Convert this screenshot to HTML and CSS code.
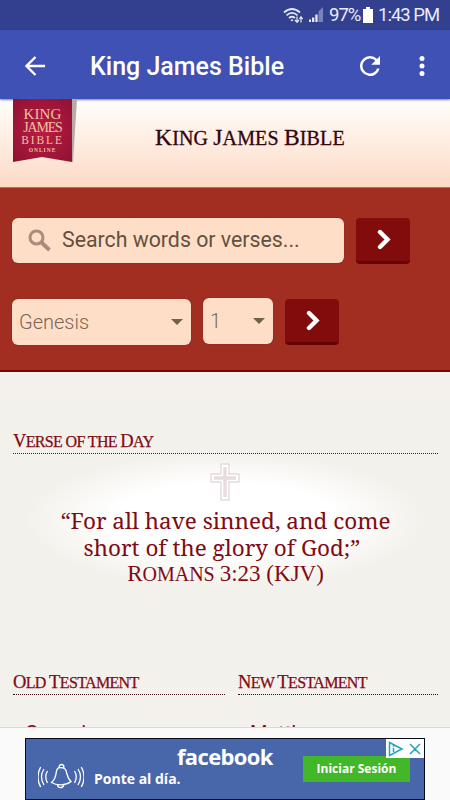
FILE: index.html
```
<!DOCTYPE html>
<html lang="en">
<head>
  <meta charset="UTF-8" />
  <meta name="viewport" content="width=device-width,initial-scale=1" />
  <title>King James Bible</title>
  <link rel="stylesheet" href="styles.css">
</head>
<body>

  <!-- Phone status bar -->
  <div class="status-bar">
    <svg class="wifi" width="21" height="17" viewBox="0 0 21 17" fill="none" stroke="#e4e8f8" stroke-width="1.7">
      <path d="M1 5.500Q9-1.500 17 5.500M3.500 8.300Q9 3.500 14.500 8.300M6 11Q9 8.500 12 11"/>
      <circle cx="9" cy="13.300" r=".8" fill="#e4e8f8" stroke-width=".7"/>
      <path d="M14 9.500v6M12 13l2 2.300 2-2.300M18 15.500v-6M16.300 12L18 9.800l1.700 2.200" stroke-width="1.200"/>
    </svg>
    <svg class="signal" width="16" height="16" viewBox="0 0 16 16" fill="#e4e8f8">
      <path d="M1 12.500h2V15H1zM4 10.500h2.300V15H4zM7.300 7.500h2.300V15H7.300z"/>
      <path d="M10.500 4.500L15 0v15h-4.500z" opacity=".4"/>
    </svg>
    <span class="percent">97%</span>
    <svg class="battery" width="10" height="16" viewBox="0 0 10 16" fill="#fff"><path d="M3 0h4v2h3v14H0V2h3z"/></svg>
    <span class="clock">1:43 PM</span>
  </div>

  <!-- App toolbar -->
  <div class="toolbar">
    <svg class="back" width="20" height="20" viewBox="0 0 20 20" fill="none" stroke="#fff" stroke-width="2.300"><path d="M20 10H2M10.500 1L1.500 10l9 9"/></svg>
    <h1>King James Bible</h1>
    <svg class="refresh" width="20" height="20" viewBox="4 4 16 16" fill="#fff"><path d="M17.650 6.350A7.960 7.960 0 0 0 12 4a8 8 0 1 0 7.730 10h-2.080A6 6 0 1 1 12 6c1.660 0 3.140.69 4.220 1.780L13 11h7V4z"/></svg>
    <svg class="more" width="6" height="20" viewBox="0 0 6 20" fill="#fff"><circle cx="3" cy="2.500" r="2.500"/><circle cx="3" cy="10" r="2.500"/><circle cx="3" cy="17.500" r="2.500"/></svg>
  </div>

  <div class="page">
    <header class="site-header">
      <div class="ribbon">
        <span class="r1">KING</span>
        <span class="r2">JAMES</span>
        <span class="r3">BIBLE</span>
        <span class="r4">ONLINE</span>
      </div>
      <div class="site-title"><b>K</b>ing <b>J</b>ames <b>B</b>ible</div>
    </header>

    <div class="search-panel">
      <div class="search-row">
        <div class="search-box">
          <svg width="23" height="23" viewBox="0 0 23 23" fill="none" stroke="#aa8c7b"><circle cx="8.500" cy="8.500" r="6.500" stroke-width="3"/><path d="M13.500 13.500l8 7.500" stroke-width="4"/></svg>
          <span>Search words or verses...</span>
        </div>
        <button><svg width="14" height="21" viewBox="0 0 14 21" fill="none" stroke="#fff" stroke-width="4.400" stroke-linecap="round"><path d="M3 3l7.500 7.500L3 18"/></svg></button>
      </div>
      <div class="pick-row">
        <div class="select book">Genesis</div>
        <div class="select chapter">1</div>
        <button><svg width="14" height="21" viewBox="0 0 14 21" fill="none" stroke="#fff" stroke-width="4.400" stroke-linecap="round"><path d="M3 3l7.500 7.500L3 18"/></svg></button>
      </div>
    </div>

    <main>
      <h2 class="votd"><b>V</b>erse of the <b>D</b>ay</h2>
      <div class="verse">
        <svg width="30" height="38" viewBox="0 0 30 38" fill="none" stroke="#e5dbdc"><path d="M11 1h8v10h10v8H19v18h-8V19H1v-8h10z" fill="#fff" stroke-width="1.400"/><path d="M15 4v30M4 15h22" stroke="#e7dcde" stroke-width="3.400"/></svg>
        <p class="line1">“For all have sinned, and come</p>
        <p class="line2">short of the glory of God;”</p>
        <p class="source"><b>R</b>omans <b>3:23 (KJV)</b></p>
      </div>
      <div class="testaments">
        <section class="old">
          <h2><b>O</b>ld <b>T</b>estament</h2>
          <p>Genesis</p>
        </section>
        <section class="new">
          <h2><b>N</b>ew <b>T</b>estament</h2>
          <p>Matthew</p>
        </section>
      </div>
    </main>
  </div>

  <!-- Bottom ad -->
  <div class="ad-bar">
    <div class="ad">
      <svg class="bell" width="46" height="26" viewBox="0 0 46 26" fill="none" stroke="#fff" stroke-width="1.300">
        <path d="M13.500 19.500c5-4 4-9 5.500-13 1-2.500 7-2.500 8.500 0 2 4 1 8 5.500 12-5 4-14 4.500-19.500 1zM21 4.500c0-4 5-4 5 0M19.500 22c.5 3.500 5.500 3.500 6.500 0"/>
        <path d="M9.500 8q-3.500 5.500 0 12M6 6q-5 7.500 0 16M2.700 4q-5.500 10 0 20M36.500 8q3.500 5.500 0 12M40 6q5 7.500 0 16M43.300 4q5.500 10 0 20"/>
      </svg>
      <span class="slogan">Ponte al día.</span>
      <span class="brand">facebook</span>
      <span class="cta">Iniciar Sesión</span>
      <div class="ad-choices">
        <svg width="40" height="20" viewBox="0 0 40 20" fill="none" stroke="#20a5bb" stroke-width="1.500"><path d="M3.500 3.500L16 10 3.500 16.500zM7.500 9v4M7.500 6.500v1.300M24 5l10 10M34 5L24 15"/></svg>
      </div>
    </div>
  </div>

</body>
</html>
```
FILE: styles.css
```
* { box-sizing: border-box; margin: 0; padding: 0 }
body {
  width: 450px;
  height: 800px;
  overflow: hidden;
  display: flex;
  flex-direction: column;
  font-family: Roboto, sans-serif;
  background: #f3f1eb;
}
svg { display: block; flex-shrink: 0; }
b { font-weight: inherit; }

.status-bar {
  height: 30px;
  flex-shrink: 0;
  display: flex;
  align-items: center;
  justify-content: flex-end;
  padding-right: 11px;
  background: #32408f;
  color: #e8ecfb;
  font-size: 18.5px;
  white-space: nowrap;
}
.wifi { margin-right: 1px; }
.signal { margin: 0 5px 0 3px; }
.percent { width: 31px; letter-spacing: -1px; }
.battery { margin: 0 5px 0 3px; }
.clock { width: 61px; letter-spacing: -1px; }

.toolbar {
  height: 69px;
  flex-shrink: 0;
  display: flex;
  align-items: center;
  padding: 2px 25px 0;
  background: #3f51b5;
  box-shadow: 0 1px 2px rgba(30,35,90,.6);
  color: #fff;
  position: relative;
}
.toolbar h1 {
  flex: 1;
  margin: 2px 0 0 45px;
  font-size: 25px;
  font-weight: 500;
}
.refresh { margin-right: 39px; }

.page {
  height: 628px;
  flex-shrink: 0;
  overflow: hidden;
}

.site-header {
  height: 89px;
  display: flex;
  align-items: flex-start;
  padding-left: 13px;
  background: linear-gradient(#fffefb, #fddac6);
  border-bottom: 1px solid #b87550;
}
.ribbon {
  width: 64px;
  height: 63px;
  display: flex;
  flex-direction: column;
  align-items: center;
  padding: 9px 5px 0 0;
  background: linear-gradient(95deg, #b5aaa6 0, #b5aaa6) 59px 0 / 5px 63px no-repeat,
              radial-gradient(#bb1b45, #8e1231) 0 0 / 59px 63px no-repeat;
  clip-path: polygon(0 0, 100% 0, 60px 100%, 59px 100%, 29px 58px, 0 100%);
  color: #f1c0a0;
  font-family: "Liberation Serif", serif;
  font-size: 15px;
  line-height: 13px;
}
.ribbon span { white-space: nowrap; }
.r1 { letter-spacing: .1px; }
.r2 { font-size: 14px; letter-spacing: -1.2px; }
.r3 { font-size: 11.5px; line-height: 12px; letter-spacing: 1.9px; }
.r4 {
  font-size: 5.5px;
  font-weight: bold;
  line-height: 7px;
  letter-spacing: 1px;
  margin-top: 1px;
}
.site-title {
  margin: 24px 0 0 78px;
  width: 200px;
  font: 20px/28px "Liberation Serif", serif;
  letter-spacing: .15px;
  text-transform: uppercase;
  white-space: nowrap;
  color: #34040b;
  -webkit-text-stroke: .3px #34040b;
}
.site-title b { font-size: 23.5px; }

.search-panel {
  height: 184px;
  padding: 30px 13px 0 12px;
  background: #a12e20;
  border-bottom: 2px solid #780507;
}
.search-row, .pick-row { display: flex; }
.search-box {
  width: 332px;
  height: 45px;
  display: flex;
  align-items: center;
  padding-left: 16px;
  border-radius: 6px;
  background: #ffdec7;
  box-shadow: 0 0 1px #760e0c;
  color: #63503f;
  font-size: 21.3px;
}
.search-box span { margin: -2px 0 0 11px; white-space: nowrap; }
button {
  width: 54px;
  height: 46px;
  display: flex;
  align-items: center;
  justify-content: center;
  margin-left: 12px;
  padding: 0 0 0 1px;
  border: 0;
  border-bottom: 3px solid #690207;
  border-radius: 4px;
  background: #800d0c;
}
.pick-row { padding-top: 35px; }
.select {
  position: relative;
  height: 46px;
  padding-left: 7px;
  border-radius: 6px;
  background: #ffdec7;
  box-shadow: 0 0 1px #760e0c;
  color: #7b6754;
  font-size: 20px;
  font-weight: 300;
  line-height: 46px;
}
.select::after {
  content: '';
  position: absolute;
  right: 8px;
  top: 20px;
  border: 6px solid transparent;
  border-top-color: #70614d;
  border-bottom: 0;
}
.book { width: 179px; }
.chapter { width: 70px; margin: -1px 0 0 12px; }

main { padding: 56px 12px 0 13px; }
h2 {
  height: 26px;
  font: 16px/26px "Liberation Serif", serif;
  letter-spacing: -.65px;
  text-transform: uppercase;
  white-space: nowrap;
  color: #820a12;
  -webkit-text-stroke: .25px #820a12;
  border-bottom: 1px dotted #820a12;
}
h2 b { font-size: 18.5px; }
.verse {
  height: 215px;
  padding-top: 9px;
  background: radial-gradient(ellipse 202px 68px at 212px 66px, #fff 0, #fff 55%, rgba(255,255,255,0) 100%);
  color: #820a12;
  text-align: center;
  font: 22.5px/27px "Noto Serif", "DejaVu Serif Condensed", serif;
  white-space: nowrap;
}
.verse svg { margin: 0 auto 6px 197px; }
.line2 { margin-right: 7px; }
.source {
  font: 20px/26px "Liberation Serif", serif;
  text-transform: uppercase;
}
.source b { font-size: 23px; }
.testaments {
  display: grid;
  grid-template-columns: 212px 200px;
  gap: 13px;
}
.testaments h2 { border-bottom-color: #3b1010; }
.testaments p {
  margin: 24px 0 0 12px;
  font-size: 20px;
  line-height: 28px;
  color: #820a12;
}

.ad-bar {
  flex: 1;
  padding: 10px 25px 0;
  background: #fafafa;
  border-top: 1px solid #d9dad5;
}
.ad {
  position: relative;
  height: 62px;
  border: 1px solid #080b18;
  background: #4867aa;
  color: #fff;
  font-family: "Open Sans", sans-serif;
  font-weight: bold;
}
.bell, .slogan, .brand, .cta, .ad-choices { position: absolute; white-space: nowrap; }
.bell { left: 12px; top: 24px; }
.slogan { left: 68px; top: 30px; font-size: 14px; line-height: 20px; }
.brand { left: 151px; top: 3px; font-size: 22px; line-height: 28px; letter-spacing: -.65px; }
.cta {
  left: 277px;
  top: 17px;
  width: 107px;
  height: 26px;
  background: #42b72a;
  font-size: 12px;
  line-height: 26px;
  text-align: center;
}
.ad-choices { right: 0; top: 0; width: 38px; height: 19px; background: #fff; }
```
